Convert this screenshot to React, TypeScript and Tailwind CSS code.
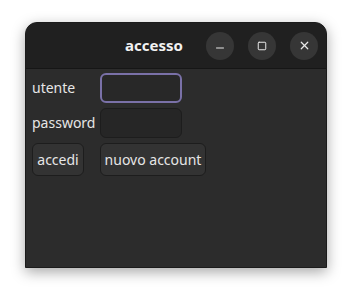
import { Minus, Square, X } from 'lucide-react'

export default function App() {
    return (
        <div className="w-[352px] h-[297px] bg-white relative" style={{ fontFamily: '"Noto Sans", "Open Sans", sans-serif' }}>
            <div className="absolute left-[25px] top-[22px] w-[302px] h-[246px] flex flex-col rounded-t-[12px] bg-[#2c2c2c] border border-[#1b1b1b] shadow-[0_4px_14px_rgba(0,0,0,0.35)] overflow-hidden">
                {/* Header */}
                <div className="h-[46px] flex items-center bg-[#202020] border-b border-[#161616]">
                    <div className="flex-1 flex items-center justify-center pl-[76px]">
                        <span className="text-[15px] font-bold text-[#f2f2f2]">accesso</span>
                    </div>
                    <div className="flex items-center gap-[14px] pr-[8px]">
                        <div className="w-[28px] h-[28px] rounded-full bg-[#363636] flex items-center justify-center">
                            <Minus className="w-[12px] h-[12px] text-[#e8e8e8] mt-[5px]" strokeWidth={2} />
                        </div>
                        <div className="w-[28px] h-[28px] rounded-full bg-[#363636] flex items-center justify-center">
                            <Square className="w-[10px] h-[10px] text-[#e8e8e8]" strokeWidth={2.4} />
                        </div>
                        <div className="w-[28px] h-[28px] rounded-full bg-[#363636] flex items-center justify-center">
                            <X className="w-[13px] h-[13px] text-[#e8e8e8]" strokeWidth={2.2} />
                        </div>
                    </div>
                </div>

                {/* Body */}
                <div className="grid grid-cols-[62px_auto] gap-x-[6px] gap-y-[5px] pl-[6px] pt-[4px] justify-start items-center text-[14px] text-[#e6e6e6]">
                    <span className="leading-none">utente</span>
                    <div className="w-[82px] h-[30px] rounded-[6px] border-2 border-[#7a71a8] bg-[#282828]" />
                    <span className="leading-none">password</span>
                    <div className="w-[82px] h-[30px] rounded-[6px] border border-[#1d1d1d] bg-[#262626]" />
                    <div className="h-[33px] w-[52px] rounded-[6px] border border-[#1d1d1d] bg-[#333333] flex items-center justify-center">
                        accedi
                    </div>
                    <div className="h-[33px] w-[106px] rounded-[6px] border border-[#1d1d1d] bg-[#333333] flex items-center justify-center">
                        nuovo account
                    </div>
                </div>
            </div>
        </div>
    )
}
